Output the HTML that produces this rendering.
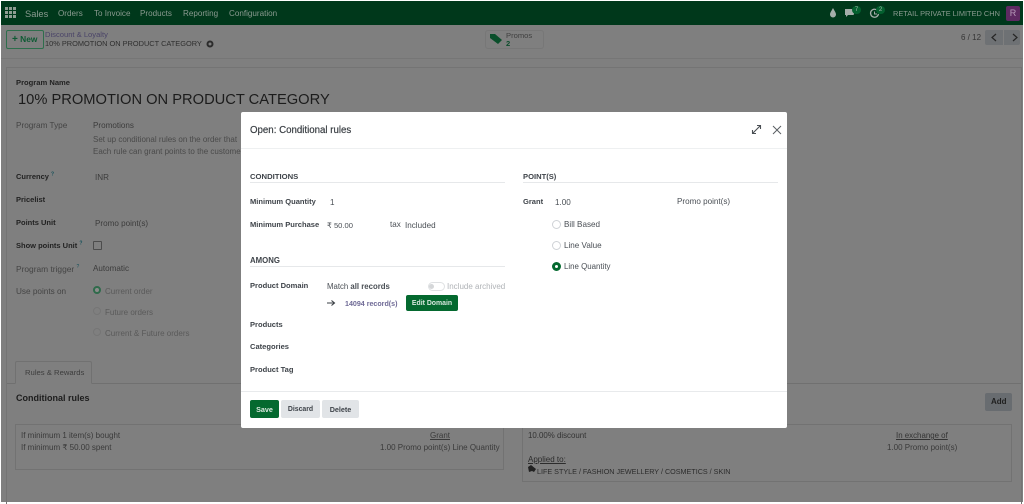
<!DOCTYPE html>
<html><head><meta charset="utf-8"><style>
html,body{margin:0;padding:0;background:#fff}
#p{position:relative;width:1024px;height:504px;overflow:hidden;background:#fff;font-family:"Liberation Sans",sans-serif;font-size:8px;color:#333}
#b{position:absolute;left:1px;top:1px;width:1022px;height:501px;background:#7f7f7f;overflow:hidden}
#a{position:absolute;left:0;top:0;width:1024px;height:504px;filter:blur(.35px)}
.t{position:absolute;white-space:nowrap;line-height:12px;height:12px;margin-top:1px}
.r{position:absolute}
.bd{font-weight:bold}
.n{color:#8a9a90;font-size:8.1px}
.k{color:#222;font-size:7.5px}.g{color:#333}.m{color:#3c3c3c;font-size:8.1px}.f{color:#555}
.d{color:#4a4f55;font-size:8.1px}.dk{color:#3f444a;font-weight:bold;font-size:7.55px}
.circ{position:absolute;width:7px;height:7px;border:1px solid #cfd2d6;border-radius:50%;background:#fff}
.btn{position:absolute;border-radius:2px;text-align:center;font-weight:bold;font-size:7.2px}
sup{font-size:5px;color:#14505a;line-height:0}
</style></head><body><div id="p"><div id="a">
<div id="b"></div>

<!-- navbar -->
<div class="r" style="left:1px;top:1px;width:1022px;height:24px;background:#00381b"></div>
<svg class="r" style="left:5px;top:7px" width="11" height="11"><g fill="#8f9c93"><rect width="3" height="3"/><rect x="4" width="3" height="3"/><rect x="8" width="3" height="3"/><rect y="4" width="3" height="3"/><rect x="4" y="4" width="3" height="3"/><rect x="8" y="4" width="3" height="3"/><rect y="8" width="3" height="3"/><rect x="4" y="8" width="3" height="3"/><rect x="8" y="8" width="3" height="3"/></g></svg>
<div class="t n" style="left:25px;top:7px;font-size:9.3px">Sales</div>
<div class="t n" style="left:58px;top:7px">Orders</div>
<div class="t n" style="left:94px;top:7px">To Invoice</div>
<div class="t n" style="left:140px;top:7px">Products</div>
<div class="t n" style="left:183px;top:7px">Reporting</div>
<div class="t n" style="left:229px;top:7px">Configuration</div>
<svg class="r" style="left:829px;top:8px" width="8" height="10"><path d="M4 0C2.500 3 1 4.500 1 6.500a3 3 0 0 0 6 0C7 4.500 5.500 3 4 0Z" fill="#a5aeaa"/></svg>
<svg class="r" style="left:844px;top:8px" width="12" height="10"><path d="M1 1h8a1 1 0 0 1 1 1v4a1 1 0 0 1-1 1H4L2 9V7H1Z" fill="#a5aeaa"/></svg>
<div class="r" style="left:852px;top:6px;width:9px;height:8px;border-radius:4px;background:#04602f;color:#a5b5aa;font-size:6px;line-height:8px;text-align:center">7</div>
<svg class="r" style="left:869px;top:8px" width="11" height="11"><path d="M8.500 2.500A4 4 0 1 0 9.500 6" fill="none" stroke="#a5aeaa" stroke-width="1.300"/><path d="M5.500 3.500V6H8" fill="none" stroke="#a5aeaa"/></svg>
<div class="r" style="left:876px;top:6px;width:9px;height:8px;border-radius:4px;background:#04602f;color:#a5b5aa;font-size:6px;line-height:8px;text-align:center">2</div>
<div class="t n" style="left:893px;top:7px;font-size:7.4px">RETAIL PRIVATE LIMITED CHN</div>
<div class="r" style="left:1006px;top:6px;width:14px;height:15px;border-radius:2px;background:#5e2a62;color:#b79cba;font-size:9px;line-height:15px;text-align:center">R</div>

<!-- control panel -->
<div class="r" style="left:1px;top:58px;width:1022px;height:1px;background:#767676"></div>
<div class="r" style="left:6px;top:30px;width:36px;height:17px;border:1px solid #2e6e4c;border-radius:2px;box-sizing:content-box;"></div>
<div class="t bd" style="left:12px;top:32px;color:#0e5a33;font-size:8.4px"><span style="font-size:10px">+</span> New</div>
<div class="t" style="left:45px;top:28px;color:#4a4468;font-size:7.6px">Discount &amp; Loyalty</div>
<div class="t" style="left:45px;top:37px;color:#2f2f2f;font-size:7.4px">10% PROMOTION ON PRODUCT CATEGORY</div>
<svg class="r" style="left:206px;top:40px" width="8" height="8"><circle cx="4" cy="4" r="2.500" fill="none" stroke="#2c2c2c" stroke-width="2"/></svg>
<div class="r" style="left:485px;top:30px;width:57px;height:17px;border:1px solid #777;border-radius:3px"></div>
<svg class="r" style="left:489px;top:33px" width="15" height="12"><path d="M1 1h5l7 6-4 4-8-6Z" fill="#0a4f2b"/></svg>
<div class="t" style="left:506px;top:29px;color:#3f3f3f;font-size:7.6px">Promos</div>
<div class="t bd" style="left:506px;top:37px;color:#0e4d2d;font-size:7.6px">2</div>
<div class="t" style="left:961px;top:31px;color:#353535;font-size:8px">6 / 12</div>
<div class="r" style="left:985px;top:30px;width:18px;height:15px;background:#6e7174;border-radius:2px 0 0 2px"></div>
<div class="r" style="left:1004px;top:30px;width:16px;height:15px;background:#6e7174;border-radius:0 2px 2px 0"></div>
<svg class="r" style="left:985px;top:30px" width="36" height="15"><path d="M11 4L7 7.500 11 11M28 4L32 7.500 28 11" fill="none" stroke="#262626" stroke-width="1.200"/></svg>

<!-- sheet -->
<div class="r" style="left:6px;top:67px;width:1016px;height:440px;border:1px solid #747474;box-sizing:border-box"></div>
<div class="t bd k" style="left:16px;top:76px;font-size:7.6px">Program Name</div>
<div class="t" style="left:18px;top:90px;font-size:14.7px;line-height:19px;height:19px;color:#1c1c1c">10% PROMOTION ON PRODUCT CATEGORY</div>

<div class="t" style="left:16px;top:119px;color:#444;font-size:8.2px">Program Type</div>
<div class="t m" style="left:93px;top:119px">Promotions</div>
<div class="t f" style="left:93px;top:133px;color:#4a4a4a">Set up conditional rules on the order that</div>
<div class="t f" style="left:93px;top:145px;color:#4a4a4a">Each rule can grant points to the custome</div>

<div class="t bd k" style="left:16px;top:170px">Currency <sup>?</sup></div>
<div class="t m" style="left:95px;top:171px">INR</div>
<div class="t bd k" style="left:16px;top:193px">Pricelist</div>
<div class="t bd k" style="left:16px;top:216px">Points Unit</div>
<div class="t m" style="left:95px;top:217px">Promo point(s)</div>
<div class="t bd k" style="left:16px;top:239px">Show points Unit <sup>?</sup></div>
<div class="r" style="left:93px;top:241px;width:7px;height:7px;border:1px solid #4c4c4c;border-radius:1px"></div>
<div class="t" style="left:16px;top:262px;color:#444;font-size:8.4px">Program trigger <sup>?</sup></div>
<div class="t m" style="left:93px;top:262px">Automatic</div>
<div class="t" style="left:16px;top:285px;color:#444;font-size:8.2px">Use points on</div>
<div class="r" style="left:93px;top:286px;width:4px;height:4px;border:2px solid #2f6b4b;border-radius:50%;background:#8c8c8c;box-sizing:content-box"></div>
<div class="t" style="left:105px;top:285px;color:#5a5a5a">Current order</div>
<div class="r" style="left:93px;top:307px;width:6px;height:6px;border:1px solid #767676;border-radius:50%"></div>
<div class="t" style="left:105px;top:306px;color:#5a5a5a">Future orders</div>
<div class="r" style="left:93px;top:328px;width:6px;height:6px;border:1px solid #767676;border-radius:50%"></div>
<div class="t" style="left:105px;top:327px;color:#5a5a5a">Current &amp; Future orders</div>

<!-- tabs -->
<div class="r" style="left:7px;top:383px;width:1014px;height:1px;background:#707070"></div>
<div class="r" style="left:15px;top:361px;width:77px;height:23px;border:1px solid #717171;border-bottom:1px solid #7f7f7f;border-radius:2px 2px 0 0;box-sizing:border-box"></div>
<div class="t" style="left:25px;top:366px;color:#3d3d3d;font-size:7.7px">Rules &amp; Rewards</div>
<div class="t bd" style="left:16px;top:391px;font-size:9px;color:#1d1d1d">Conditional rules</div>
<div class="r" style="left:985px;top:393px;width:27px;height:18px;background:#686c70;border-radius:2px"></div>
<div class="t bd" style="left:991px;top:395px;color:#1f1f1f;font-size:8px">Add</div>

<div class="r" style="left:15px;top:424px;width:489px;height:46px;border:1px solid #727272;box-sizing:border-box"></div>
<div class="t" style="left:21px;top:429px;color:#3a3a3a">If minimum 1 item(s) bought</div>
<div class="t" style="left:21px;top:441px;color:#3a3a3a">If minimum ₹ 50.00 spent</div>
<div class="t" style="left:430px;top:429px;color:#3a3a3a;text-decoration:underline">Grant</div>
<div class="t" style="left:380px;top:441px;color:#3a3a3a">1.00 Promo point(s) Line Quantity</div>

<div class="r" style="left:522px;top:424px;width:490px;height:58px;border:1px solid #727272;box-sizing:border-box"></div>
<div class="t" style="left:528px;top:429px;color:#333;font-size:7.9px">10.00% discount</div>
<div class="t" style="left:896px;top:429px;color:#333;font-size:7.9px;text-decoration:underline">In exchange of</div>
<div class="t" style="left:887px;top:441px;color:#3a3a3a;font-size:8px">1.00 Promo point(s)</div>
<div class="t" style="left:528px;top:453px;color:#2c2c2c;font-size:8px;text-decoration:underline">Applied to:</div>
<svg class="r" style="left:527px;top:464px" width="10" height="9"><path d="M1 3l3-2 5 4-2 3-2-1-3 1Z" fill="#222"/></svg>
<div class="t" style="left:537px;top:465px;color:#2c2c2c;font-size:7.2px">LIFE STYLE / FASHION JEWELLERY / COSMETICS / SKIN</div>

<!-- modal -->
<div class="r" style="left:241px;top:112px;width:546px;height:316px;background:#fff;border-radius:2px"></div>
<div class="r" style="left:241px;top:148px;width:546px;height:1px;background:#eef0f1"></div>
<div class="t" style="left:250px;top:124px;font-size:9.7px;color:#3a3f44;-webkit-text-stroke:.2px #3a3f44">Open: Conditional rules</div>
<svg class="r" style="left:751px;top:124px" width="11" height="11"><path d="M1.500 9.500L9.500 1.500M6 1.500h3.500V5M1.500 6v3.500H5" fill="none" stroke="#4a4f54" stroke-width="1.100"/></svg>
<svg class="r" style="left:772px;top:125px" width="10" height="10"><path d="M1 1l8 8M9 1L1 9" fill="none" stroke="#5a5f64" stroke-width="1"/></svg>

<div class="t dk" style="left:250px;top:170px;font-size:7.7px">CONDITIONS</div>
<div class="r" style="left:250px;top:182px;width:255px;height:1px;background:#e6e8ea"></div>
<div class="t dk" style="left:250px;top:195px">Minimum Quantity</div>
<div class="t d" style="left:330px;top:196px">1</div>
<div class="t dk" style="left:250px;top:218px">Minimum Purchase</div>
<div class="t d" style="left:327px;top:219px;font-size:7.6px">₹ 50.00</div>
<div class="t d" style="left:390px;top:218px">tax</div>
<div class="t d" style="left:405px;top:219px">Included</div>

<div class="t dk" style="left:250px;top:254px;font-size:7.8px">AMONG</div>
<div class="r" style="left:250px;top:266px;width:255px;height:1px;background:#e6e8ea"></div>
<div class="t dk" style="left:250px;top:279px">Product Domain</div>
<div class="t d" style="left:327px;top:280px;font-size:7.8px">Match <b>all records</b></div>
<div class="r" style="left:428px;top:282px;width:15px;height:7px;border:1px solid #dfe1e3;border-radius:5px;box-sizing:content-box"></div>
<div class="r" style="left:429px;top:284px;width:5px;height:5px;background:#d5d7d9;border-radius:50%"></div>
<div class="t" style="left:447px;top:280px;color:#b0b3b7">Include archived</div>
<svg class="r" style="left:327px;top:299px" width="9" height="8"><path d="M0 4h7M4.500 1.500L7.500 4 4.500 6.500" fill="none" stroke="#3a3f44" stroke-width="1.100"/></svg>
<div class="t bd" style="left:345px;top:297px;color:#6f6a96;font-size:7.1px">14094 record(s)</div>
<div class="btn" style="left:406px;top:295px;width:52px;height:16px;background:#04692f;color:#d9e8df;line-height:17px;font-size:6.9px">Edit Domain</div>
<div class="t dk" style="left:250px;top:318px">Products</div>
<div class="t dk" style="left:250px;top:340px">Categories</div>
<div class="t dk" style="left:250px;top:363px">Product Tag</div>

<div class="t dk" style="left:523px;top:170px;font-size:7.6px">POINT(S)</div>
<div class="r" style="left:523px;top:182px;width:255px;height:1px;background:#e6e8ea"></div>
<div class="t dk" style="left:523px;top:195px">Grant</div>
<div class="t d" style="left:555px;top:196px">1.00</div>
<div class="t d" style="left:677px;top:195px">Promo point(s)</div>
<div class="circ" style="left:552px;top:220px"></div>
<div class="t d" style="left:564px;top:218px">Bill Based</div>
<div class="circ" style="left:552px;top:241px"></div>
<div class="t d" style="left:564px;top:239px">Line Value</div>
<div class="r" style="left:552px;top:262px;width:3px;height:3px;border:3px solid #04692f;border-radius:50%;background:#fff;box-sizing:content-box"></div>
<div class="t d" style="left:564px;top:260px;font-size:7.9px">Line Quantity</div>

<div class="r" style="left:241px;top:391px;width:546px;height:1px;background:#e8eaec"></div>
<div class="btn" style="left:250px;top:400px;width:29px;height:18px;background:#04692f;color:#d9e8df;line-height:19px">Save</div>
<div class="btn" style="left:281px;top:400px;width:39px;height:18px;background:#e1e4e7;color:#3f444a;line-height:20px;font-size:6.9px">Discard</div>
<div class="btn" style="left:322px;top:400px;width:37px;height:18px;background:#e1e4e7;color:#3f444a;line-height:19px">Delete</div>
</div></div></body></html>
